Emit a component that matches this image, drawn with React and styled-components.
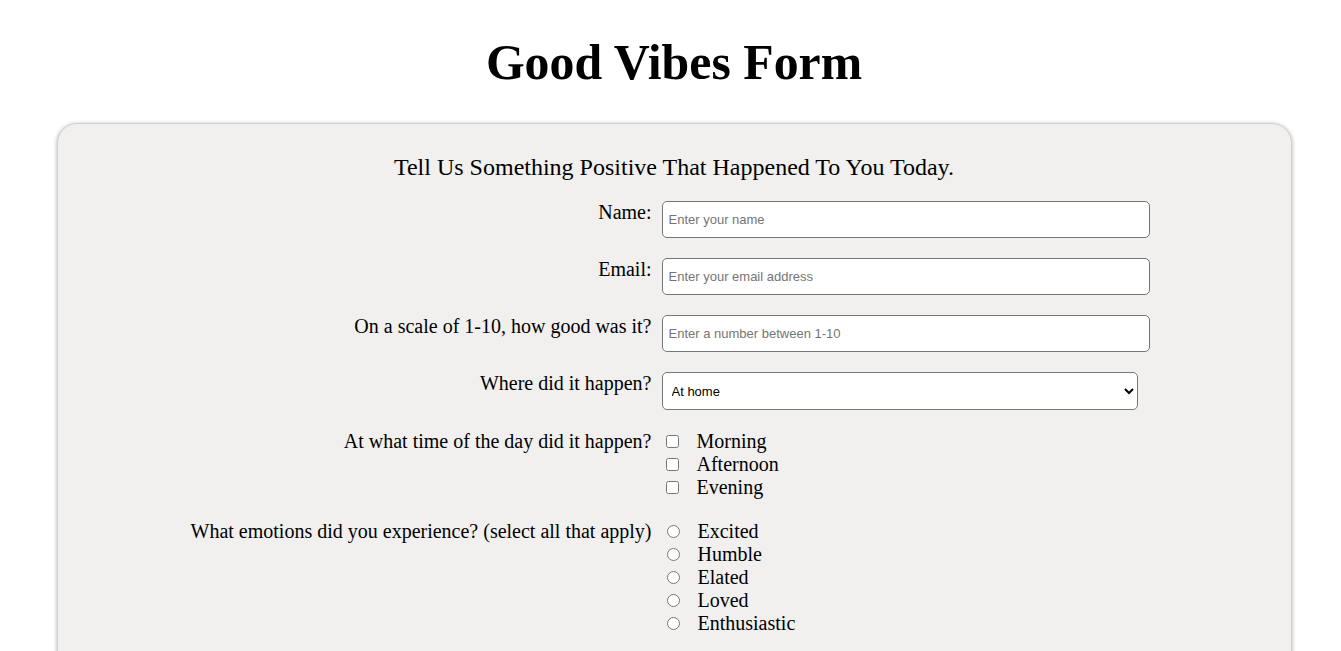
import styled, { createGlobalStyle } from "styled-components";

const GlobalStyle = createGlobalStyle`
  body {
    margin: 0;
    background: #fff;
    font-family: "Liberation Serif", "Times New Roman", serif;
    color: #000;
  }
`;

const Page = styled.div`
  padding-left: 7px;
`;

const Title = styled.h1`
  margin: 34px 0 32px;
  font-size: 49.8px;
  font-weight: bold;
  text-align: center;
`;

const Card = styled.form`
  width: 1235px;
  margin: 0 auto;
  box-sizing: border-box;
  padding-bottom: 40px;
  background: #f1f0ef;
  border: 1px solid #d0d0d0;
  border-radius: 20px;
  box-shadow: 0 1px 4px rgba(0, 0, 0, 0.32);
`;

const Subtitle = styled.p`
  margin: 30px 0 20px;
  font-size: 24px;
  text-align: center;
`;

const Row = styled.div`
  display: flex;
  align-items: flex-start;
  gap: 10px;
  margin-bottom: ${(p) => p.$space || 20}px;
`;

const Label = styled.label`
  flex: 0 0 594px;
  text-align: right;
  font-size: 20px;
  line-height: 23px;
`;

const TextInput = styled.input`
  width: 488px;
  height: 37px;
  box-sizing: border-box;
  padding: 0 6px;
  border: 1px solid #767676;
  border-radius: 5px;
  background: #fff;
  font-family: "Liberation Sans", Arial, sans-serif;
  font-size: 13px;
  &::placeholder {
    color: #757575;
  }
`;

const Select = styled.select`
  width: 476px;
  height: 38px;
  box-sizing: border-box;
  padding: 0 5px;
  border: 1px solid #767676;
  border-radius: 5px;
  background: #fff;
  color: #000;
  font-family: "Liberation Sans", Arial, sans-serif;
  font-size: 13px;
`;

const OptionList = styled.div`
  display: flex;
  flex-direction: column;
`;

const Choice = styled.label`
  display: flex;
  align-items: center;
  font-size: 20px;
  line-height: 23px;

  input {
    width: 13px;
    height: 13px;
    margin: 0 18px 0 ${(p) => (p.$radio ? 5 : 4)}px;
  }
`;

const times = ["Morning", "Afternoon", "Evening"];
const emotions = ["Excited", "Humble", "Elated", "Loved", "Enthusiastic"];

export default function App() {
  return (
    <Page>
      <GlobalStyle />
      <Title>Good Vibes Form</Title>
      <Card onSubmit={(e) => e.preventDefault()}>
        <Subtitle>Tell Us Something Positive That Happened To You Today.</Subtitle>
        <Row>
          <Label htmlFor="name">Name:</Label>
          <TextInput id="name" type="text" placeholder="Enter your name" />
        </Row>
        <Row>
          <Label htmlFor="email">Email:</Label>
          <TextInput id="email" type="email" placeholder="Enter your email address" />
        </Row>
        <Row>
          <Label htmlFor="scale">On a scale of 1-10, how good was it?</Label>
          <TextInput id="scale" type="text" placeholder="Enter a number between 1-10" />
        </Row>
        <Row>
          <Label htmlFor="where">Where did it happen?</Label>
          <Select id="where" defaultValue="home">
            <option value="home">At home</option>
            <option value="work">At work</option>
            <option value="school">At school</option>
            <option value="outside">Outside</option>
          </Select>
        </Row>
        <Row $space={21}>
          <Label>At what time of the day did it happen?</Label>
          <OptionList>
            {times.map((t) => (
              <Choice key={t}>
                <input type="checkbox" name="time" value={t} />
                {t}
              </Choice>
            ))}
          </OptionList>
        </Row>
        <Row>
          <Label>What emotions did you experience? (select all that apply)</Label>
          <OptionList>
            {emotions.map((m) => (
              <Choice key={m} $radio>
                <input type="radio" name={m} value={m} />
                {m}
              </Choice>
            ))}
          </OptionList>
        </Row>
      </Card>
    </Page>
  );
}
